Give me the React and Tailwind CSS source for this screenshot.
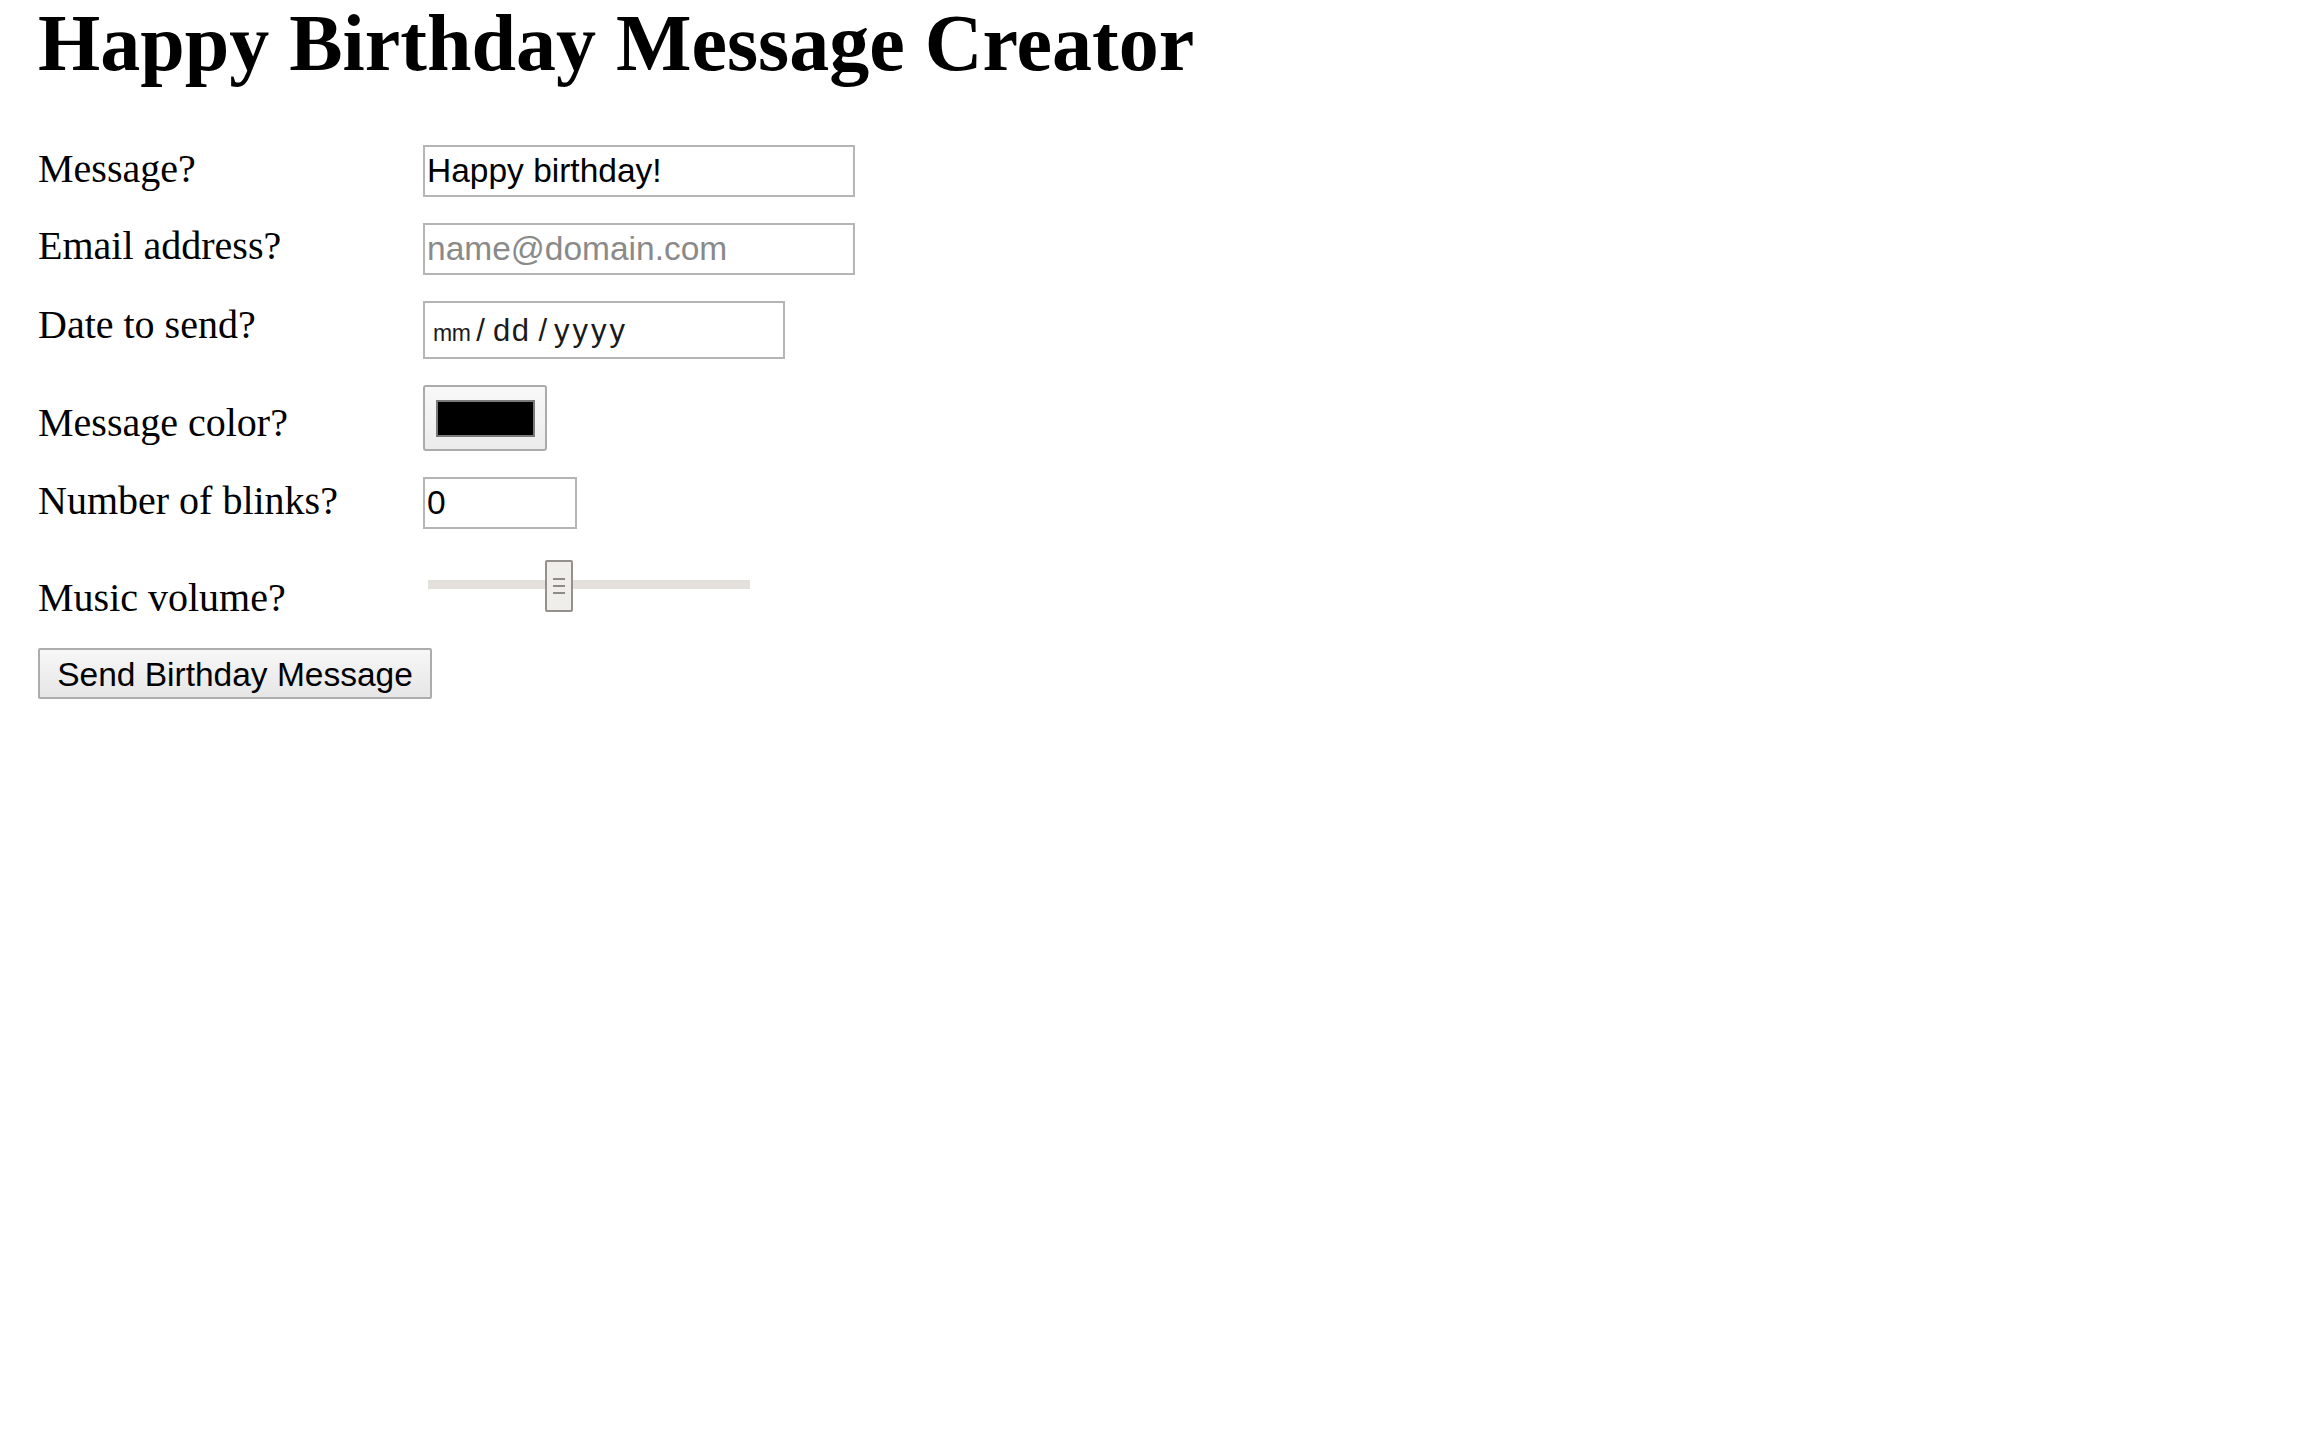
import React from 'react';

const serif = "font-['Liberation_Serif','Times_New_Roman',serif]";
const sans = "font-['Liberation_Sans',Arial,sans-serif]";

const Row = ({ label, labelTop, className = '', children }) => (
  <div className={`flex items-start ${className}`}>
    <div className={`w-[385px] shrink-0 text-[40px] leading-[45px] text-black ${serif} ${labelTop}`}>
      {label}
    </div>
    {children}
  </div>
);

const App = () => {
  return (
    <div className="min-h-screen bg-white pl-[38px] text-black">
      <h1 className={`mt-[4px] text-[80px] leading-[79px] font-bold ${serif}`}>
        Happy Birthday Message Creator
      </h1>

      <form className="flex flex-col" onSubmit={(e) => e.preventDefault()}>
        <Row label="Message?" labelTop="mt-[1px]" className="mt-[62px]">
          <input
            type="text"
            defaultValue="Happy birthday!"
            className={`w-[432px] h-[52px] border-2 border-[#b5b5b5] bg-white pl-[2px] text-[33.5px] text-black outline-none ${sans}`}
          />
        </Row>

        <Row label="Email address?" labelTop="mt-0" className="mt-[26px]">
          <input
            type="text"
            placeholder="name@domain.com"
            className={`w-[432px] h-[52px] border-2 border-[#b5b5b5] bg-white pl-[2px] text-[33.5px] text-black placeholder:text-[#8a8a8a] outline-none ${sans}`}
          />
        </Row>

        <Row label="Date to send?" labelTop="mt-[1px]" className="mt-[26px]">
          <div className={`w-[362px] h-[58px] border-2 border-[#b5b5b5] bg-white flex items-baseline pl-[8px] pt-[5px] text-[#1a1a1a] ${sans}`}>
            <span className="text-[23px] tracking-[-0.5px]">mm</span>
            <span className="ml-[6px] text-[31px]">/</span>
            <span className="ml-[8px] text-[31px] tracking-[1.5px]">dd</span>
            <span className="ml-[8px] text-[31px]">/</span>
            <span className="ml-[7px] text-[31px] tracking-[3px]">yyyy</span>
          </div>
        </Row>

        <Row label="Message color?" labelTop="mt-[15px]" className="mt-[26px]">
          <div className="w-[124px] h-[66px] rounded-[3px] border-2 border-[#ababab] bg-gradient-to-b from-[#f8f8f8] to-[#ececec] flex items-start pl-[11px] pt-[13px]">
            <div className="w-[99px] h-[37px] border-2 border-[#7a7a7a] bg-black" />
          </div>
        </Row>

        <Row label="Number of blinks?" labelTop="mt-[1px]" className="mt-[26px]">
          <input
            type="text"
            defaultValue="0"
            className={`w-[154px] h-[52px] border-2 border-[#b5b5b5] bg-white pl-[2px] text-[33.5px] text-black outline-none ${sans}`}
          />
        </Row>

        <Row label="Music volume?" labelTop="mt-[15px]" className="mt-[31px]">
          <div className="relative w-[327px] h-[52px]">
            <div className="mt-[20px] ml-[5px] w-[322px] h-[9px] bg-[#e4e1dc]" />
            <div className="absolute left-[122px] top-0 w-[28px] h-[52px] rounded-[2px] border-2 border-[#94918c] bg-[#f0eeea] flex flex-col items-center pt-[16px] gap-[5px]">
              <div className="w-[12px] h-[2px] bg-[#8e8c88]" />
              <div className="w-[12px] h-[2px] bg-[#8e8c88]" />
              <div className="w-[12px] h-[2px] bg-[#8e8c88]" />
            </div>
          </div>
        </Row>

        <div className="mt-[28px]">
          <button
            type="submit"
            className={`w-[394px] h-[51px] rounded-[2px] border-2 border-[#acacac] bg-gradient-to-b from-[#f7f7f7] to-[#e6e6e6] text-[33.5px] text-black ${sans}`}
          >
            Send Birthday Message
          </button>
        </div>
      </form>
    </div>
  );
};

export default App;
